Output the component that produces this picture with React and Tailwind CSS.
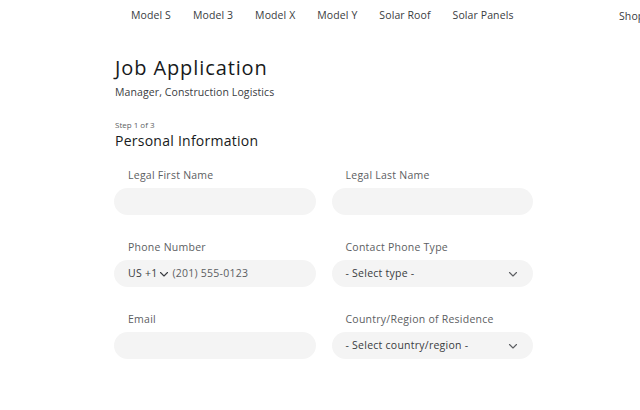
import React from "react";

const navItems = ["Model S", "Model 3", "Model X", "Model Y", "Solar Roof", "Solar Panels"];

const Chevron = ({ className }) => (
  <svg className={className} width="10" height="10" viewBox="0 0 10 10" fill="none">
    <path d="M1.5 3.5 L5 7 L8.5 3.5" stroke="currentColor" strokeWidth="1.1" strokeLinecap="round" strokeLinejoin="round" />
  </svg>
);

const Field = ({ label, children }) => (
  <div className="flex flex-col">
    <label className="pl-[14px] text-[10.5px] tracking-[0.25px] leading-[14px] text-[#5c5e62] mb-[6px]">{label}</label>
    {children}
  </div>
);

const TextInput = () => (
  <div className="h-[27px] rounded-full bg-[#f4f4f4]"></div>
);

const Select = ({ placeholder }) => (
  <div className="h-[27px] rounded-full bg-[#f4f4f4] flex items-center justify-between pl-[14px] pr-[15px] text-[10.5px] tracking-[0.25px] text-[#393c41]">
    <span>{placeholder}</span>
    <Chevron className="text-[#5c5e62]" />
  </div>
);

export default function App() {
  return (
    <div className="w-[640px] h-[410px] bg-white overflow-hidden text-[#393c41]" style={{ fontFamily: "'Open Sans', 'Noto Sans', sans-serif" }}>
      <nav className="h-[32px] flex items-center relative">
        <ul className="flex items-center gap-[22px] pl-[131px] text-[10.5px] tracking-[0.1px] text-[#393c41] font-medium">
          {navItems.map((n) => (
            <li key={n} className="whitespace-nowrap">{n}</li>
          ))}
        </ul>
        <span className="absolute left-[619px] top-[9px] text-[10.5px] tracking-[0.1px] font-medium">Shop</span>
      </nav>

      <main className="pl-[114px]">
        <h1 className="mt-[24px] text-[20px] tracking-[0.9px] leading-[24px] text-[#171a20] pl-[1px]">Job Application</h1>
        <p className="mt-[6px] text-[10.5px] tracking-[0.1px] leading-[12px] text-[#393c41] pl-[1px]">Manager, Construction Logistics</p>

        <div className="mt-[22px] text-[8px] leading-[10px] text-[#5c5e62] pl-[1px]">Step 1 of 3</div>
        <h2 className="mt-[2px] text-[14px] tracking-[0.25px] leading-[18px] text-[#171a20] pl-[1px]">Personal Information</h2>

        <div className="mt-[18px] grid grid-cols-2 gap-x-[16px] gap-y-[25px] w-[419px]">
          <Field label="Legal First Name"><TextInput /></Field>
          <Field label="Legal Last Name"><TextInput /></Field>
          <Field label="Phone Number">
            <div className="h-[27px] rounded-full bg-[#f4f4f4] flex items-center pl-[14px] text-[10.5px] tracking-[0.25px]">
              <span className="text-[#393c41]">US +1</span>
              <Chevron className="ml-[2px] mr-[3px] text-[#393c41]" />
              <span className="text-[#5c5e62]">(201) 555-0123</span>
            </div>
          </Field>
          <Field label="Contact Phone Type"><Select placeholder="- Select type -" /></Field>
          <Field label="Email"><TextInput /></Field>
          <Field label="Country/Region of Residence"><Select placeholder="- Select country/region -" /></Field>
        </div>
      </main>
    </div>
  );
}
